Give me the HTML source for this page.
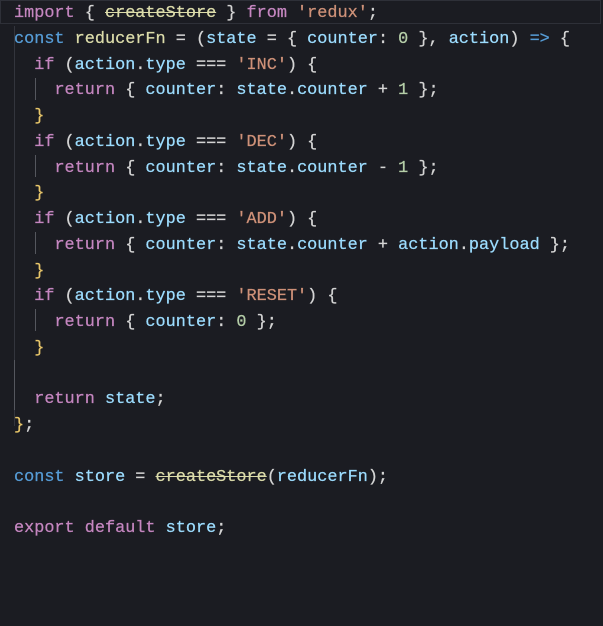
<!DOCTYPE html>
<html><head><meta charset="utf-8"><style>
html,body{margin:0;padding:0;background:#1b1c22;width:603px;height:626px;overflow:hidden}
#c{position:absolute;left:14px;top:1px;font-family:"Liberation Mono",monospace;font-size:16.85px;line-height:25.75px;color:#d4d4d4;white-space:pre;-webkit-text-stroke:0.25px currentColor}
.k{color:#c586c0}.b{color:#569cd6}.v{color:#9cdcfe}.f{color:#dcdcaa}.s{color:#ce9178}.n{color:#b5cea8}.y{color:#e8c66a}
.st{text-decoration:line-through}
.hl{position:absolute;left:0;top:0;width:601px;height:24px;border:1px solid #2e3038;box-sizing:border-box}
.g{position:absolute;width:1px;background:#33353d}
</style></head><body>
<div class="hl"></div>
<div class="g" style="left:14px;top:26px;height:400px"></div>
<div class="g" style="left:35px;top:78px;height:22px;background:#55575e"></div>
<div class="g" style="left:35px;top:155px;height:22px;background:#55575e"></div>
<div class="g" style="left:35px;top:232px;height:22px;background:#55575e"></div>
<div class="g" style="left:35px;top:309px;height:22px;background:#55575e"></div>
<div class="g" style="left:14px;top:360px;height:50px;background:#55575e"></div>
<div id="c"><span class="k">import</span> { <span class="f st">createStore</span> } <span class="k">from</span> <span class="s">'redux'</span>;
<span class="b">const</span> <span class="f">reducerFn</span> = (<span class="v">state</span> = { <span class="v">counter</span>: <span class="n">0</span> }, <span class="v">action</span>) <span class="b">=&gt;</span> {
  <span class="k">if</span> (<span class="v">action</span>.<span class="v">type</span> === <span class="s">'INC'</span>) {
    <span class="k">return</span> { <span class="v">counter</span>: <span class="v">state</span>.<span class="v">counter</span> + <span class="n">1</span> };
  <span class="y">}</span>
  <span class="k">if</span> (<span class="v">action</span>.<span class="v">type</span> === <span class="s">'DEC'</span>) {
    <span class="k">return</span> { <span class="v">counter</span>: <span class="v">state</span>.<span class="v">counter</span> - <span class="n">1</span> };
  <span class="y">}</span>
  <span class="k">if</span> (<span class="v">action</span>.<span class="v">type</span> === <span class="s">'ADD'</span>) {
    <span class="k">return</span> { <span class="v">counter</span>: <span class="v">state</span>.<span class="v">counter</span> + <span class="v">action</span>.<span class="v">payload</span> };
  <span class="y">}</span>
  <span class="k">if</span> (<span class="v">action</span>.<span class="v">type</span> === <span class="s">'RESET'</span>) {
    <span class="k">return</span> { <span class="v">counter</span>: <span class="n">0</span> };
  <span class="y">}</span>

  <span class="k">return</span> <span class="v">state</span>;
<span class="y">}</span>;

<span class="b">const</span> <span class="v">store</span> = <span class="f st">createStore</span>(<span class="v">reducerFn</span>);

<span class="k">export</span> <span class="k">default</span> <span class="v">store</span>;</div>
</body></html>
